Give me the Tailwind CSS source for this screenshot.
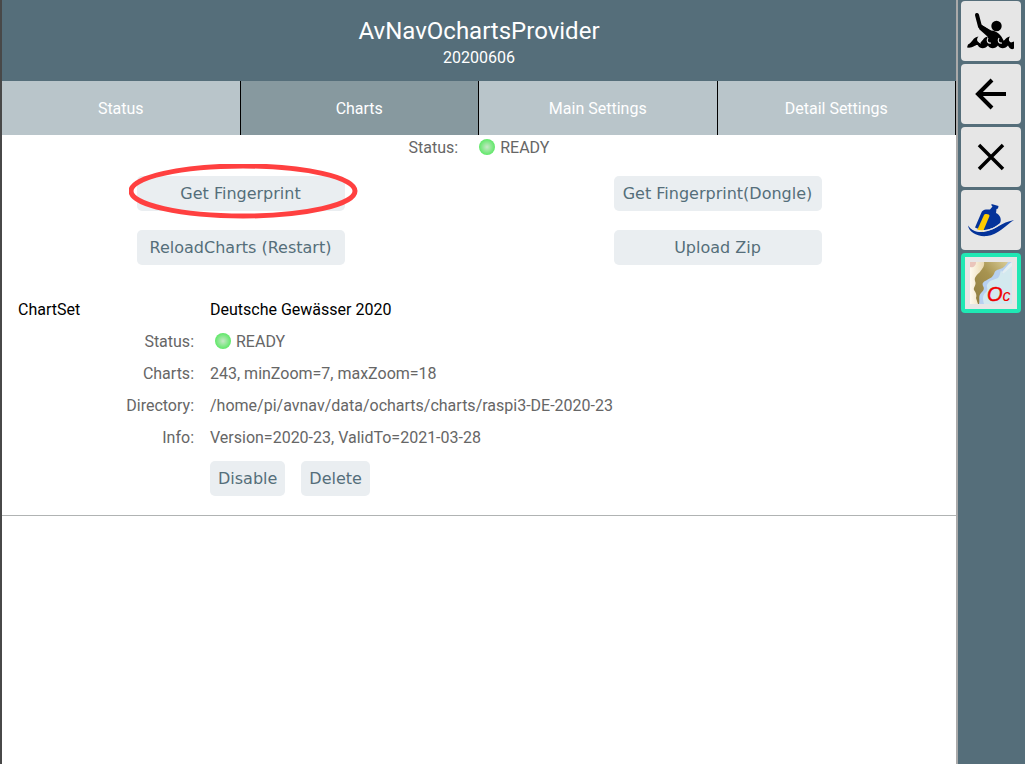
<!DOCTYPE html>
<html lang="en">
<head>
    <meta charset="UTF-8">
    <meta name="viewport" content="width=device-width, initial-scale=1.0">
    <title>AvNavOchartsProvider</title>
    <script src="https://cdn.jsdelivr.net/npm/@tailwindcss/browser@4"></script>
</head>
<body class="flex min-h-screen bg-white border-l-2 border-[#484848] font-['Roboto',sans-serif] text-base text-[#666666]">
    <!-- Main page -->
    <div class="flex-1 min-w-0">
        <header class="bg-[#556e7a] text-white text-center pt-[17px] pb-[11px]">
            <h1 class="text-2xl leading-[29px]">AvNavOchartsProvider</h1>
            <p class="leading-6">20200606</p>
        </header>

        <!-- Tabs -->
        <nav class="grid grid-cols-4 text-white text-center leading-[52px]">
            <a href="#status" class="pt-0.5 bg-[#b9c5ca] border-r border-black">Status</a>
            <a href="#charts" class="pt-0.5 bg-[#87999f] border-r border-black">Charts</a>
            <a href="#main" class="pt-0.5 bg-[#b9c5ca] border-r border-black">Main Settings</a>
            <a href="#detail" class="pt-0.5 bg-[#b9c5ca] border-r border-black">Detail Settings</a>
        </nav>

        <main>
            <div class="flex justify-center items-center h-[26px]">
                <span>Status:</span>
                <span class="w-4 h-4 ml-[21px] mr-[5px] mb-0.5 rounded-full bg-[radial-gradient(circle_closest-side,#c8e8c8,#5fe868)]"></span>
                <span>READY</span>
            </div>

            <!-- Actions -->
            <div class="grid grid-cols-2 justify-items-center gap-y-[19px] pt-[15px] pb-7 font-['DejaVu_Sans',sans-serif] text-[#556e7a]">
                <div class="relative">
                    <button class="w-52 h-[35px] rounded-[5px] bg-[#eaeef1]">Get Fingerprint</button>
                    <svg class="absolute -left-2 -top-3 w-[229px] h-[55px] pointer-events-none" viewBox="0 0 229 55" fill="none">
                        <ellipse cx="114" cy="27" rx="112" ry="25" stroke="#ff4040" stroke-width="5"/>
                    </svg>
                </div>
                <button class="w-52 h-[35px] rounded-[5px] bg-[#eaeef1]">Get Fingerprint(Dongle)</button>
                <button class="w-52 h-[35px] rounded-[5px] bg-[#eaeef1]">ReloadCharts (Restart)</button>
                <button class="w-52 h-[35px] rounded-[5px] bg-[#eaeef1]">Upload Zip</button>
            </div>

            <!-- Chart set -->
            <section class="border-b border-[#b0b3b3] pt-px pb-[19px] leading-8">
                <div class="flex text-black">
                    <h2 class="w-48 pl-4">ChartSet</h2>
                    <span class="px-4">Deutsche Gewässer 2020</span>
                </div>
                <div class="flex">
                    <span class="w-48 pl-4 text-right">Status:</span>
                    <span class="flex items-center px-4">
                        <span class="w-4 h-4 mx-[5px] mb-0.5 rounded-full bg-[radial-gradient(circle_closest-side,#c8e8c8,#5fe868)]"></span>
                        READY
                    </span>
                </div>
                <div class="flex">
                    <span class="w-48 pl-4 text-right">Charts:</span>
                    <span class="px-4">243, minZoom=7, maxZoom=18</span>
                </div>
                <div class="flex">
                    <span class="w-48 pl-4 text-right">Directory:</span>
                    <span class="px-4">/home/pi/avnav/data/ocharts/charts/raspi3-DE-2020-23</span>
                </div>
                <div class="flex">
                    <span class="w-48 pl-4 text-right">Info:</span>
                    <span class="px-4">Version=2020-23, ValidTo=2021-03-28</span>
                </div>
                <div class="flex gap-4 pl-52 pt-[7px] font-['DejaVu_Sans',sans-serif] text-[#556e7a]">
                    <button class="h-[35px] px-2 rounded-[5px] bg-[#eaeef1]">Disable</button>
                    <button class="h-[35px] px-2 rounded-[5px] bg-[#eaeef1]">Delete</button>
                </div>
            </section>
        </main>
    </div>

    <!-- Button bar -->
    <aside class="flex flex-col gap-[3px] pt-px pl-[3px] pr-1 bg-[#556e7a] border-l-2 border-[#aaaaaa]">
        <button aria-label="Man overboard" class="flex items-center justify-center size-[60px] rounded bg-[#e6e6e6]">
            <svg class="w-12 h-12" viewBox="0 0 48 48">
                <path d="M10 8l3 11.500L25 27" fill="none" stroke="#000" stroke-width="4" stroke-linecap="round" stroke-linejoin="round"/>
                <circle cx="29.500" cy="19" r="5.200" fill="#000"/>
                <path d="M14 17.500L24 23.500c7 0 12 7 14 13.500H17l4-7-9-8z" fill="#000"/>
                <!-- Waves -->
                <path d="M1 37.500C5 36 6 30 11.500 29.500c-2 2-2 5 1 6 3 0 3-5 8.500-6-2 3-1 5 1 6 4 0 5-5 10-6-2 3-1 5 1 6 4 0 5-5 10-6-2 3-1 5 1 6l3-1v7c-3 2-5-1-6-3-2 3-8 4-10 0-2 3-8 4-10 0-2 3-8 4-10 0-2-2-4 3-11 2z" fill="#000"/>
                <path d="M21 31c-2 3 0 5.500 3 5M32 31c-2 3 0 5.500 3 5M12 31c-1 3 0 5 2 5" fill="none" stroke="#e6e6e6" stroke-width="1.200"/>
            </svg>
        </button>
        <button aria-label="Back" class="flex items-center justify-center size-[60px] rounded bg-[#e6e6e6]">
            <svg class="w-12 h-12" viewBox="0 0 48 48" fill="none" stroke="#000" stroke-width="4">
                <path d="M39 24H11M25 10L11 24l14 14"/>
            </svg>
        </button>
        <button aria-label="Close" class="flex items-center justify-center size-[60px] rounded bg-[#e6e6e6]">
            <svg class="w-12 h-12" viewBox="0 0 48 48" fill="none" stroke="#000" stroke-width="3.500">
                <path d="M12 12l24 24M36 12L12 36"/>
            </svg>
        </button>
        <button aria-label="Message bottle" class="flex items-center justify-center size-[60px] rounded bg-[#e6e6e6]">
            <svg class="w-12 h-12" viewBox="0 0 48 48">
                <path d="M24.500 8l7 2-.5 2.500-1.500.5-.5 4c4 2 6 6 4 10.500-3 3-8 5-12 6-4 1-9 0-13-2l6-14c1-3 3-4 5-4h4l2.500-3-1-1z" fill="#04339a"/>
                <path d="M17 19c1-2 6-1 5.500 1L16 35.500l-6-1z" fill="#ffcc00"/>
                <path d="M1 29.500c4 6 11 7.500 18 6 10-2 15-9 28-11.500-8 5-16 15-27 16C10 41 2 36 1 29.500z" fill="#04339a"/>
                <path d="M5 32.500c5 3.500 14 3 21 0 4-2 6-4 9-6" fill="none" stroke="#e6e6e6" stroke-width="1.200"/>
            </svg>
        </button>
        <button aria-label="Ocharts" class="flex items-center justify-center size-[60px] rounded bg-[#e6e6e6] border-4 border-[#1fe8b4]">
            <svg class="w-[42px] h-[42px]" viewBox="0 0 42 42">
                <defs>
                    <linearGradient id="land" x1="0" y1="0" x2="1" y2="0">
                        <stop offset="0" stop-color="#fffaf0"/>
                        <stop offset="1" stop-color="#ead9b0"/>
                    </linearGradient>
                    <linearGradient id="coast" x1="0" y1="1" x2="1" y2="0">
                        <stop offset="0" stop-color="#8c7a40"/>
                        <stop offset=".6" stop-color="#a89450"/>
                        <stop offset="1" stop-color="#d8cc98"/>
                    </linearGradient>
                </defs>
                <path d="M0 0h42v42H0z" fill="#d3e9ef"/>
                <path d="M0 0h42c-4 4-6 8-9 12l-2-4c-1 3-1 6-3 8l-8 3c-2 2-4 4-3 6 1 3 0 5-2 6-3 3-2 7-1 11H0z" fill="#b7d0f0"/>
                <path d="M42 0v4l-9 8-1-2 7-8z" fill="#e4eef2"/>
                <path d="M0 0h38c-2 3-4 6-8 7-4 1-5 2-6 5-2 4-4 4-7 6-4 2-5 3-4 6 2 3 0 5-2 7-3 3-1 7-2 11H0z" fill="url(#coast)"/>
                <path d="M0 0h14c1 4-2 7-4 10-3 3-6 5-5 9 2 4-2 6-1 9 2 3 3 5 2 8l2 6H0z" fill="url(#land)"/>
                <path d="M0 0h6c0 4-3 6-6 5z" fill="#eac5bb"/>
                <text x="17" y="39" fill="#f00000" font-family="Liberation Sans, sans-serif" font-style="italic" font-size="20"><tspan stroke="#f00000" stroke-width=".4">O</tspan><tspan font-size="16">c</tspan></text>
            </svg>
        </button>
    </aside>
</body>
</html>
